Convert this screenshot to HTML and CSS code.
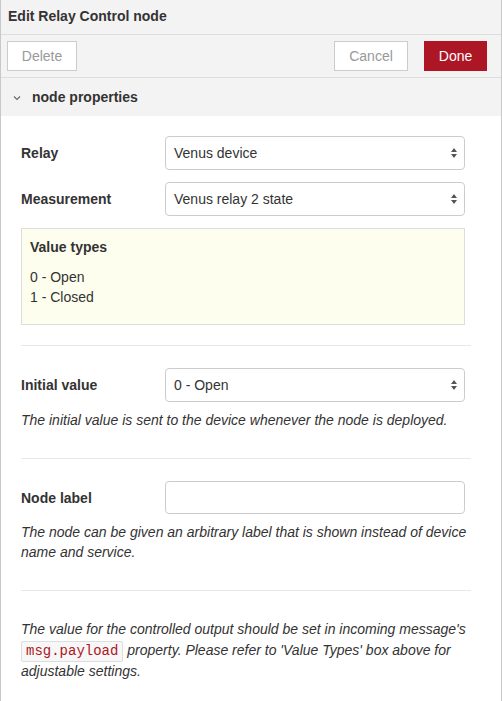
FILE: index.html
```html
<!DOCTYPE html>
<html>
<head>
<meta charset="utf-8">
<link rel="stylesheet" href="styles.css">
</head>
<body>
<div class="tray">
  <div class="tray-header">Edit Relay Control node</div>
  <div class="tray-toolbar">
    <button class="btn btn-plain">Delete</button>
    <div class="toolbar-right">
      <button class="btn btn-plain btn-cancel">Cancel</button>
      <button class="btn btn-primary">Done</button>
    </div>
  </div>
  <div class="section-header">
    <svg class="chevron" width="8" height="6" viewBox="0 0 8 6"><path d="M1 1.5 L4 4.5 L7 1.5" fill="none" stroke="#666" stroke-width="1.1"/></svg>
    <span>node properties</span>
  </div>
  <div class="content">
    <div class="form-row">
      <label class="form-label">Relay</label>
      <div class="select">
        <span>Venus device</span>
        <svg class="arrows" width="8" height="12" viewBox="0 0 8 12"><path d="M4 1 L7 5 L1 5 Z M1 7 L7 7 L4 11 Z" fill="#555"/></svg>
      </div>
    </div>
    <div class="form-row">
      <label class="form-label">Measurement</label>
      <div class="select">
        <span>Venus relay 2 state</span>
        <svg class="arrows" width="8" height="12" viewBox="0 0 8 12"><path d="M4 1 L7 5 L1 5 Z M1 7 L7 7 L4 11 Z" fill="#555"/></svg>
      </div>
    </div>
    <div class="info-box">
      <div class="info-title">Value types</div>
      <div class="info-list">
        <div>0 - Open</div>
        <div>1 - Closed</div>
      </div>
    </div>
    <div class="divider divider-first"></div>
    <div class="form-row">
      <label class="form-label">Initial value</label>
      <div class="select">
        <span>0 - Open</span>
        <svg class="arrows" width="8" height="12" viewBox="0 0 8 12"><path d="M4 1 L7 5 L1 5 Z M1 7 L7 7 L4 11 Z" fill="#555"/></svg>
      </div>
    </div>
    <p class="hint">The initial value is sent to the device whenever the node is deployed.</p>
    <div class="divider"></div>
    <div class="form-row">
      <label class="form-label">Node label</label>
      <input class="text-input" type="text">
    </div>
    <p class="hint">The node can be given an arbitrary label that is shown instead of device name and service.</p>
    <div class="divider"></div>
    <p class="hint hint-last">The value for the controlled output should be set in incoming message's <code>msg.payload</code> property. Please refer to 'Value Types' box above for adjustable settings.</p>
  </div>
</div>
</body>
</html>
```

FILE: styles.css
```css
html, body {
  margin: 0;
  padding: 0;
  background: #fff;
}
body {
  font-family: "Liberation Sans", Arial, sans-serif;
  font-size: 14px;
  color: #333;
}
.tray {
  width: 502px;
  height: 701px;
  box-sizing: border-box;
  border-left: 1px solid #c8c8c8;
  border-right: 1px solid #c8c8c8;
  overflow: hidden;
  background: #fff;
}
.tray-header {
  height: 34px;
  line-height: 33px;
  background: #f3f3f3;
  border-bottom: 1px solid #ddd;
  padding-left: 7px;
  font-weight: bold;
  color: #333;
}
.tray-toolbar {
  height: 42px;
  background: #f3f3f3;
  border-bottom: 1px solid #ddd;
  display: flex;
  align-items: center;
  justify-content: space-between;
  padding: 0 14px 0 6px;
}
.toolbar-right {
  display: flex;
  gap: 16px;
}
.btn {
  font-family: "Liberation Sans", Arial, sans-serif;
  font-size: 14px;
  height: 30px;
  box-sizing: border-box;
  padding: 0;
  cursor: pointer;
}
.btn-plain {
  background: #fff;
  border: 1px solid #ccc;
  color: #999;
  width: 70px;
}
.btn-cancel {
  width: 74px;
}
.btn-primary {
  background: #ad1625;
  border: 1px solid #ad1625;
  color: #fff;
  width: 63px;
}
.section-header {
  height: 38px;
  background: #f3f3f3;
  display: flex;
  align-items: center;
  padding-left: 12px;
  font-weight: bold;
  color: #333;
}
.chevron {
  margin-right: 11px;
  margin-top: 1px;
}
.content {
  padding: 20px 20px 0 20px;
}
.form-row {
  display: flex;
  align-items: center;
  margin-bottom: 12px;
}
.form-label {
  width: 144px;
  font-weight: bold;
  color: #333;
}
.select {
  position: relative;
  width: 300px;
  height: 34px;
  box-sizing: border-box;
  border: 1px solid #ccc;
  border-radius: 4px;
  background: #fff;
  display: flex;
  align-items: center;
  padding-left: 8px;
  color: #333;
}
.arrows {
  position: absolute;
  right: 6px;
  top: 10px;
}
.text-input {
  width: 300px;
  height: 33px;
  box-sizing: border-box;
  border: 1px solid #ccc;
  border-radius: 4px;
  margin: 0;
  padding: 0 8px;
  font-family: "Liberation Sans", Arial, sans-serif;
  font-size: 14px;
}
.info-box {
  width: 444px;
  box-sizing: border-box;
  background: #fefeee;
  border: 1px solid #ddd;
  padding: 8px 8px 17px 8px;
  line-height: 20px;
}
.info-title {
  font-weight: bold;
  margin-bottom: 10px;
}
.divider {
  width: 450px;
  height: 1px;
  background: #e8e8e8;
  margin: 20px 0 22px 0;
}
.divider-first {
  margin-top: 20px;
}
.hint {
  font-style: italic;
  line-height: 20px;
  margin: -4px 0 0 0;
  width: 450px;
}
.hint + .divider {
  margin-top: 28px;
}
.hint-last {
  margin-top: 28px;
  line-height: 20.5px;
}
code {
  font-family: "Liberation Mono", "Courier New", monospace;
  font-style: normal;
  font-size: 14px;
  color: #ad1625;
  background: #f7f7f7;
  border: 1px solid #ddd;
  border-radius: 2px;
  padding: 1px 4px 2px 4px;
}
```
